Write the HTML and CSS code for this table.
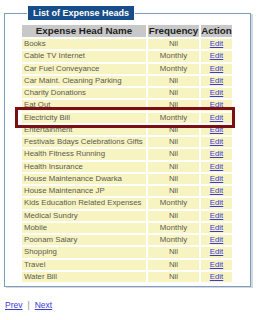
FILE: index.html
```html
<!DOCTYPE html>
<html>
<head>
<meta charset="utf-8">
<link rel="stylesheet" href="styles.css">
</head>
<body>
<div class="page">
  <fieldset class="box">
    <legend class="box-title">List of Expense Heads</legend>
    <table class="grid">
      <thead>
        <tr><th class="c-name">Expense Head Name</th><th class="c-freq">Frequency</th><th class="c-act">Action</th></tr>
      </thead>
      <tbody>
        <tr><td>Books</td><td class="f">Nil</td><td class="a"><a href="#">Edit</a></td></tr>
        <tr><td>Cable TV Internet</td><td class="f">Monthly</td><td class="a"><a href="#">Edit</a></td></tr>
        <tr><td>Car Fuel Conveyance</td><td class="f">Monthly</td><td class="a"><a href="#">Edit</a></td></tr>
        <tr><td>Car Maint. Cleaning Parking</td><td class="f">Nil</td><td class="a"><a href="#">Edit</a></td></tr>
        <tr><td>Charity Donations</td><td class="f">Nil</td><td class="a"><a href="#">Edit</a></td></tr>
        <tr><td>Eat Out</td><td class="f">Nil</td><td class="a"><a href="#">Edit</a></td></tr>
        <tr><td>Electricity Bill</td><td class="f">Monthly</td><td class="a"><a href="#">Edit</a></td></tr>
        <tr><td>Entertainment</td><td class="f">Nil</td><td class="a"><a href="#">Edit</a></td></tr>
        <tr><td>Festivals Bdays Celebrations Gifts</td><td class="f">Nil</td><td class="a"><a href="#">Edit</a></td></tr>
        <tr><td>Health Fitness Running</td><td class="f">Nil</td><td class="a"><a href="#">Edit</a></td></tr>
        <tr><td>Health Insurance</td><td class="f">Nil</td><td class="a"><a href="#">Edit</a></td></tr>
        <tr><td>House Maintenance Dwarka</td><td class="f">Nil</td><td class="a"><a href="#">Edit</a></td></tr>
        <tr><td>House Maintenance JP</td><td class="f">Nil</td><td class="a"><a href="#">Edit</a></td></tr>
        <tr><td>Kids Education Related Expenses</td><td class="f">Monthly</td><td class="a"><a href="#">Edit</a></td></tr>
        <tr><td>Medical Sundry</td><td class="f">Nil</td><td class="a"><a href="#">Edit</a></td></tr>
        <tr><td>Mobile</td><td class="f">Monthly</td><td class="a"><a href="#">Edit</a></td></tr>
        <tr><td>Poonam Salary</td><td class="f">Monthly</td><td class="a"><a href="#">Edit</a></td></tr>
        <tr><td>Shopping</td><td class="f">Nil</td><td class="a"><a href="#">Edit</a></td></tr>
        <tr><td>Travel</td><td class="f">Nil</td><td class="a"><a href="#">Edit</a></td></tr>
        <tr><td>Water Bill</td><td class="f">Nil</td><td class="a"><a href="#">Edit</a></td></tr>
      </tbody>
    </table>
  </fieldset>
  <div class="highlight"></div>
  <div class="pager"><a href="#">Prev</a><span class="sep">|</span><a href="#">Next</a></div>
</div>
</body>
</html>
```
FILE: styles.css
```css
html, body {
  margin: 0;
  padding: 0;
  background: #ffffff;
}
.page {
  position: relative;
  width: 259px;
  height: 320px;
  padding-top: 6px;
  box-sizing: border-box;
  font-family: "Liberation Sans", Arial, sans-serif;
}
.box {
  margin: 0 0 0 4px;
  width: 247px;
  box-sizing: border-box;
  border: 1px solid #7f9db9;
  padding: 3px 0 2px 15px;
  box-shadow: 2px 1px 0 #d3d9e3;
}
.box-title {
  margin-left: 7px;
  padding: 0 5px;
  border-left: 1px solid #fff;
  border-right: 1px solid #fff;
  background: #174d88;
  color: #ffffff;
  font-size: 9px;
  font-weight: bold;
  line-height: 14px;
  height: 14px;
}
.grid {
  border-collapse: separate;
  border-spacing: 2px;
  width: 214px;
  table-layout: fixed;
}
.c-name { width: 124px; }
.c-freq { width: 51px; }
.c-act { width: 31px; }
.grid th {
  background: #c8c8c8;
  color: #1e1e1e;
  font-size: 9.8px;
  font-weight: bold;
  height: 12px;
  line-height: 12px;
  padding: 0;
  text-align: center;
  white-space: nowrap;
  overflow: hidden;
}
.grid td {
  background: #f8f4c2;
  color: #5a5a52;
  font-size: 7.8px;
  height: 10.25px;
  line-height: 10px;
  padding: 0 0 0 2px;
  white-space: nowrap;
}
.grid td.f, .grid td.a {
  text-align: center;
  padding: 0;
}
.grid a, .pager a {
  color: #3a3ad6;
  text-decoration: underline;
}
.highlight {
  position: absolute;
  left: 15px;
  top: 107px;
  width: 220px;
  height: 21px;
  box-sizing: border-box;
  border: 3px solid #7b1014;
}
.pager {
  margin: 13px 0 0 5px;
  font-size: 8.5px;
  line-height: 10px;
  color: #888;
}
.pager .sep {
  margin: 0 5px;
}
```
